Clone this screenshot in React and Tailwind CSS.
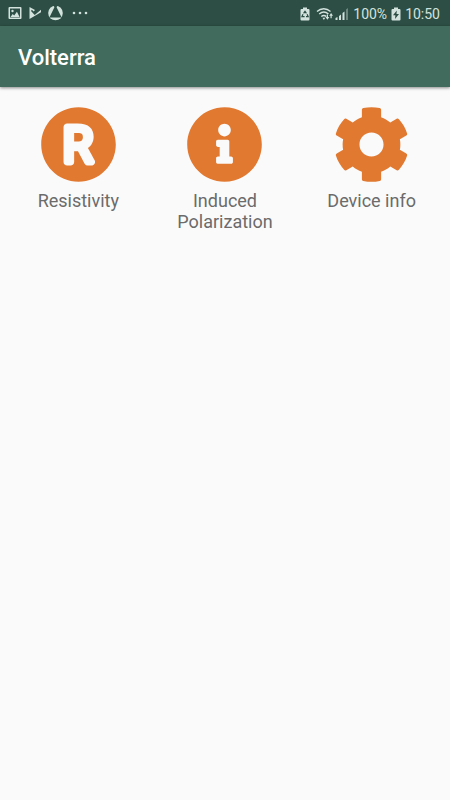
import { FaCog, FaInfoCircle, FaRegistered } from "react-icons/fa";

const items = [
  { label: "Resistivity", Icon: FaRegistered },
  { label: "Induced Polarization", Icon: FaInfoCircle },
  { label: "Device info", Icon: FaCog },
];

function ImageIcon() {
  return (
    <svg width="14" height="14" viewBox="0 0 14 14">
      <path
        fill="currentColor"
        fillRule="evenodd"
        d="M1.5 1h11a1 1 0 0 1 1 1v10a1 1 0 0 1-1 1h-11a1 1 0 0 1-1-1V2a1 1 0 0 1 1-1zM2 2.5v9h10v-9z"
      />
      <path fill="currentColor" d="M2.5 11l2.2-3 1.5 1.5 2.7-3.7 2.7 5.2z" />
      <circle cx="4.5" cy="5" r="1.2" fill="currentColor" />
    </svg>
  );
}

function PlayCheckIcon() {
  return (
    <svg width="14" height="14" viewBox="0 0 14 14">
      <path fill="currentColor" d="M1.5 1l5.5 3-1.3 1.4-1.9-1.7L3 5l3.700 4L13 3.800v2.400L1.500 13z" />
    </svg>
  );
}

function RingIcon() {
  return (
    <svg width="16" height="16" viewBox="0 0 16 16">
      <circle cx="7.5" cy="8" r="7.3" fill="currentColor" />
      <path fill="#2c4e44" d="M5.500 0h4l-.9 2.200 5 10.300H1.400l5-10.300z" />
    </svg>
  );
}

function RecycleBatteryIcon() {
  return (
    <svg width="10" height="14" viewBox="0 0 10 14">
      <path
        fill="currentColor"
        d="M3 0.5h4v1.5h1.5a1 1 0 0 1 1 1v9.5a1 1 0 0 1-1 1h-7a1 1 0 0 1-1-1V3a1 1 0 0 1 1-1H3z"
      />
      <path
        fill="none"
        stroke="#2c4e44"
        strokeWidth="1.2"
        d="M3.6 6.3L5 4.3l1.4 2M7.1 7.3l1.1 2.4H6M4.6 9.7H1.9L3 7.3"
      />
    </svg>
  );
}

function WifiIcon() {
  return (
    <svg width="18" height="14" viewBox="0 0 18 14">
      <g fill="none" stroke="currentColor" strokeWidth="1.4">
        <path d="M1 4.4c4-3.6 9.5-3.6 13.5 0" />
        <path d="M3.2 7c2.8-2.5 6.5-2.5 9.2 0" />
        <path d="M5.3 9.5c1.6-1.4 3.4-1.4 5 0" />
      </g>
      <path fill="currentColor" d="M6.5 10.8h2.7L7.9 13z" />
      <path
        fill="currentColor"
        d="M9.5 10h1.3V7.5h1.2V10h1.3l-1.9 2.7zM13.2 8.7L15.1 6 17 8.7h-1.3v2.6h-1.2V8.7z"
      />
    </svg>
  );
}

function SignalIcon() {
  return (
    <svg width="14" height="14" viewBox="0 0 14 14" fill="currentColor">
      <path d="M0.5 11l2-1v3h-2zM4 9l2-1.5V13H4zM7.5 6l2-1.5V13h-2z" />
      <path opacity="0.4" d="M11 2.5l2-1.5v12h-2z" />
    </svg>
  );
}

function ChargingIcon() {
  return (
    <svg width="10" height="14" viewBox="0 0 10 14">
      <path
        fill="currentColor"
        d="M3 0.5h4v1.5h1.5a1 1 0 0 1 1 1v9.5a1 1 0 0 1-1 1h-7a1 1 0 0 1-1-1V3a1 1 0 0 1 1-1H3z"
      />
      <path fill="#2c4e44" d="M5.8 3.5L2 8.3h2.4L4 12l4-5H5.5z" />
    </svg>
  );
}

function StatusBar() {
  return (
    <div className="flex h-[26px] items-center justify-between bg-[#2c4e44] pr-2.5 pl-2 text-[#d3e2dd]">
      <div className="flex items-center gap-1.5">
        <ImageIcon />
        <PlayCheckIcon />
        <RingIcon />
        <svg width="18" height="4" viewBox="0 0 18 4" fill="currentColor">
          <circle cx="4" cy="2" r="1.3" />
          <circle cx="10" cy="2" r="1.3" />
          <circle cx="16" cy="2" r="1.3" />
        </svg>
      </div>
      <div className="flex items-center gap-1 pt-0.5">
        <RecycleBatteryIcon />
        <div className="flex items-center gap-px pl-0.5">
          <WifiIcon />
          <SignalIcon />
        </div>
        <span className="text-[14px] leading-5">100%</span>
        <ChargingIcon />
        <span className="text-[14px] leading-5">10:50</span>
      </div>
    </div>
  );
}

export default function App() {
  return (
    <div className="min-h-screen bg-[#fafafa] font-[Roboto,sans-serif]">
      <StatusBar />
      <header className="flex h-[61px] items-center bg-[#406b5d] px-[18px] pt-0.5 shadow-[0_1px_3px_rgba(0,0,0,0.45)]">
        <h1 className="text-[22px] font-medium text-white">Volterra</h1>
      </header>
      <main className="grid grid-cols-3 items-start px-[5px] pt-[19px]">
        {items.map(({ label, Icon }) => (
          <button key={label} className="flex flex-col items-center gap-[7px] px-4">
            <Icon className="size-[77px] text-[#e17931]" />
            <span className="text-[18px] leading-[21px] text-[#6b6b6b]">{label}</span>
          </button>
        ))}
      </main>
    </div>
  );
}
